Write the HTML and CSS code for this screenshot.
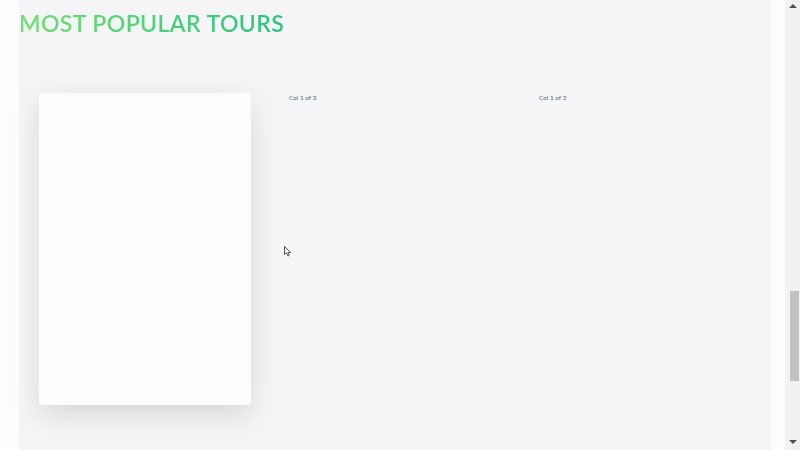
FILE: index.html
```html
<!DOCTYPE html>
<html>
<head>
<meta charset="utf-8">
<link rel="stylesheet" href="styles.css">
</head>
<body>
<div class="page">
  <div class="gutter-left"></div>
  <main class="main">
    <h1 class="title">Most Popular Tours</h1>
    <div class="cols">
      <div class="col"><div class="card"></div></div>
      <div class="col"><span class="label">Col 1 of 3</span></div>
      <div class="col"><span class="label">Col 1 of 3</span></div>
    </div>
    <svg class="cursor" width="8" height="11" viewBox="0 0 8 11"><path d="M0.5 0.5 L0.5 8.5 L2.5 6.8 L4 10 L5.3 9.4 L3.9 6.4 L6.5 6.4 Z" fill="#fff" stroke="#555" stroke-width="1"/></svg>
  </main>
  <div class="gutter-right"></div>
  <div class="scrollbar">
    <div class="arrow up"></div>
    <div class="track"><div class="thumb"></div></div>
    <div class="arrow down"></div>
  </div>
</div>
</body>
</html>
```
FILE: styles.css
```css
html, body {
  margin: 0;
  padding: 0;
  height: 100%;
  overflow: hidden;
}
body {
  font-family: Lato, "Open Sans", sans-serif;
  background: #fefcfe;
}
.page {
  display: flex;
  height: 450px;
  width: 800px;
}
.gutter-left {
  width: 19px;
  background: #fefcfe;
}
.main {
  position: relative;
  width: 752px;
  background: #f5f4f6;
}
.gutter-right {
  width: 14px;
  background: #fefcfe;
}
.title {
  margin: 8px 0 0;
  font-size: 23px;
  font-weight: 600;
  text-transform: uppercase;
  letter-spacing: 0.4px;
  line-height: 30px;
  display: inline-block;
  background: linear-gradient(90deg, #72de74, #2dc47f);
  -webkit-background-clip: text;
  background-clip: text;
  color: transparent;
}
.cols {
  display: grid;
  grid-template-columns: 250px 250px 250px;
  padding-left: 20px;
  margin-top: 55px;
}
.card {
  width: 212px;
  height: 312px;
  background: #fefcfe;
  border-radius: 3px;
  box-shadow: 0 10px 30px rgba(0, 0, 0, 0.12);
}
.label {
  display: block;
  font-size: 6.4px;
  color: #666;
  padding-top: 1px;
}
.cursor {
  position: absolute;
  left: 265px;
  top: 246px;
}
.scrollbar {
  width: 15px;
  background: #f1f1f1;
  display: flex;
  flex-direction: column;
}
.arrow {
  height: 15px;
  position: relative;
}
.arrow::after {
  content: "";
  position: absolute;
  left: 4px;
  width: 0;
  height: 0;
  border-left: 4px solid transparent;
  border-right: 4px solid transparent;
}
.arrow.up::after {
  top: 4px;
  border-bottom: 4px solid #505050;
}
.arrow.down::after {
  top: 5px;
  border-top: 4px solid #505050;
}
.track {
  flex: 1;
  padding-top: 276px;
}
.thumb {
  margin-left: 5px;
  width: 9px;
  height: 90px;
  background: #c1c1c1;
}
```
